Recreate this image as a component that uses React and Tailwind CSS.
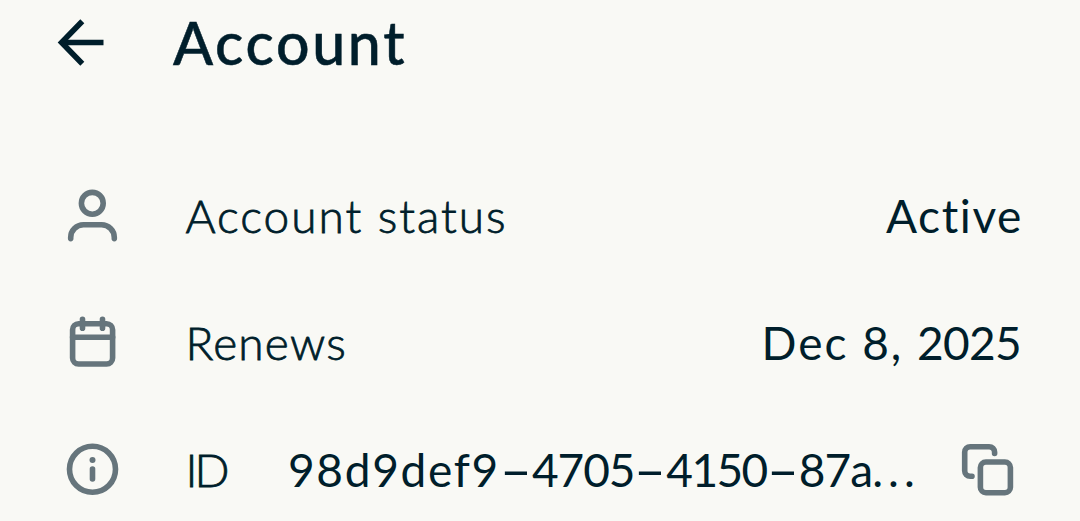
function BackIcon() {
  return (
    <svg width="61" height="61" viewBox="0 0 61 61" fill="none" stroke="currentColor" strokeWidth="5.6">
      <path d="M30.3 8.3 9.6 29.5l20.7 21.2" strokeLinejoin="miter" />
      <path d="M10 29.5h41.5" />
    </svg>
  );
}

function RowIcon({ children }) {
  return (
    <svg
      className="shrink-0 text-[#66757c]"
      width="61"
      height="61"
      viewBox="0 0 61 61"
      fill="none"
      stroke="currentColor"
      strokeWidth="5.6"
      strokeLinecap="round"
      strokeLinejoin="round"
    >
      {children}
    </svg>
  );
}

function UserIcon() {
  return (
    <RowIcon>
      <circle cx="30.3" cy="17.3" r="10.9" />
      <path d="M8.7 52.6v-1.1a12.7 12.7 0 0 1 12.7-12.7h18.2a12.7 12.7 0 0 1 12.7 12.7v1.1" />
    </RowIcon>
  );
}

function CalendarIcon() {
  return (
    <RowIcon>
      <rect x="10.6" y="10.8" width="40" height="40.2" rx="6" />
      <path d="M10.6 24.3h40M20.5 6.2v9M40.5 6.2v9" />
    </RowIcon>
  );
}

function InfoIcon() {
  return (
    <RowIcon>
      <circle cx="30.5" cy="29.3" r="23" />
      <circle cx="30.5" cy="20" r="3" fill="currentColor" stroke="none" />
      <path d="M30.5 29v10" />
    </RowIcon>
  );
}

function CopyIcon() {
  return (
    <RowIcon>
      <rect x="23.4" y="22" width="30" height="30.7" rx="5.5" />
      <path d="M15 36.3h-1.8a5.5 5.5 0 0 1-5.5-5.5V12.2a5.5 5.5 0 0 1 5.5-5.5h18.9a5.5 5.5 0 0 1 5.5 5.5v1.3" />
    </RowIcon>
  );
}

function Dash() {
  return <span className="inline-block w-[32px] origin-center scale-x-[1.95] text-center tracking-normal">-</span>;
}

function Row({ icon, label, children }) {
  return (
    <div className="flex h-[127px] shrink-0 items-center pl-[62px] pr-[57px]">
      {icon}
      <span className="ml-[62.5px] pb-[2px] font-light [-webkit-text-stroke:0.8px_#001e2b]">{label}</span>
      {children}
    </div>
  );
}

export default function App() {
  return (
    <main className="flex h-[521px] w-[1080px] flex-col overflow-hidden bg-[#f9f9f5] font-['Lato',sans-serif] text-[46px] leading-[59px] whitespace-nowrap text-[#001e2b]">
      <header className="flex h-[153px] shrink-0 items-start pt-[13px] pl-[52px]">
        <button aria-label="Back">
          <BackIcon />
        </button>
        <h1 className="ml-[60px] text-[59px] leading-[59px] font-medium tracking-[2.7px] [-webkit-text-stroke:0.5px_#001e2b]">
          Account
        </h1>
      </header>
      <Row icon={<UserIcon />} label={<span className="tracking-[2px]">Account status</span>}>
        <span className="ml-auto pb-[2px] tracking-[1.6px]">Active</span>
      </Row>
      <Row icon={<CalendarIcon />} label={<span className="tracking-[1.2px]">Renews</span>}>
        <span className="ml-auto pr-[2px] pb-[2px]">
          <span className="tracking-[2px]">Dec 8, </span>
          <span className="tracking-[-0.7px]">2025</span>
        </span>
      </Row>
      <Row icon={<InfoIcon />} label={<span className="tracking-[-3px]">ID</span>}>
        <span className="ml-[61.5px] pb-[2px]">
          <span className="tracking-[1.7px]">98d9def9</span>
          <Dash />
          <span className="tracking-[-1.1px]">4705</span>
          <Dash />
          <span className="tracking-[-1.6px]">4150</span>
          <Dash />
          <span className="tracking-[-0.9px]">87a</span>
          <span className="tracking-[5px]">...</span>
        </span>
        <button aria-label="Copy ID" className="mr-[5px] ml-auto">
          <CopyIcon />
        </button>
      </Row>
    </main>
  );
}
